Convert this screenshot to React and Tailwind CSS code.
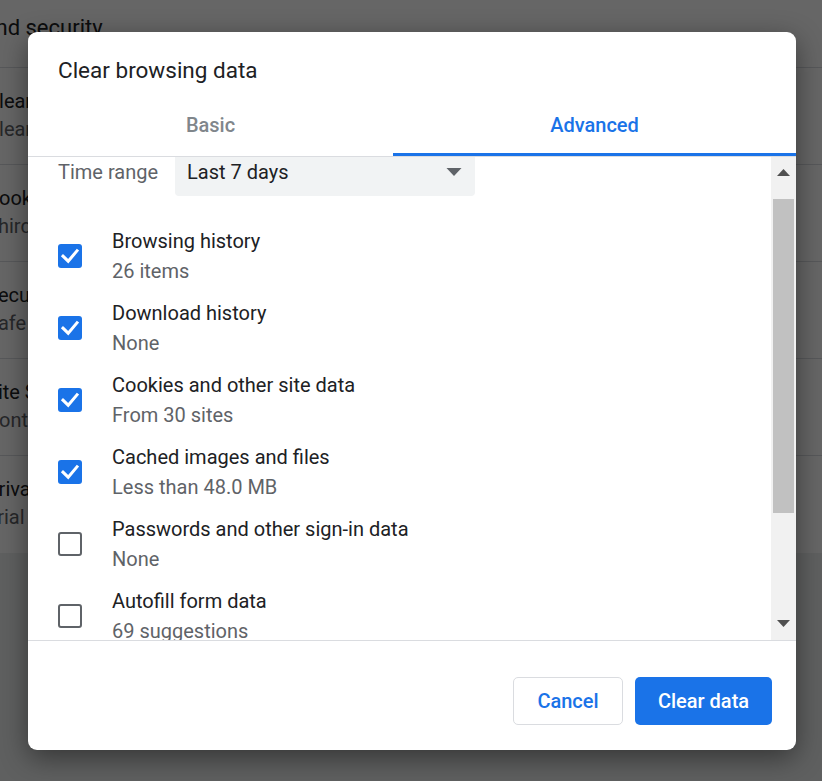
import React from 'react';

const BG_ROWS = [
  { title: 'Clear browsing data', sub: 'Clear history, cookies, cache, and more' },
  { title: 'Cookies and other site data', sub: 'Third-party cookies are blocked in Incognito mode' },
  { title: 'Security', sub: 'Safe Browsing (protection from dangerous sites) and other security settings' },
  { title: 'Site Settings', sub: 'Controls what information sites can use and show' },
  { title: 'Privacy Sandbox', sub: 'Trial features are on' },
];

const ITEMS = [
  { label: 'Browsing history', sub: '26 items', checked: true },
  { label: 'Download history', sub: 'None', checked: true },
  { label: 'Cookies and other site data', sub: 'From 30 sites', checked: true },
  { label: 'Cached images and files', sub: 'Less than 48.0 MB', checked: true },
  { label: 'Passwords and other sign-in data', sub: 'None', checked: false },
  { label: 'Autofill form data', sub: '69 suggestions', checked: false },
];

function Checkbox({ checked }) {
  if (!checked) {
    return <div className="w-6 h-6 shrink-0 rounded-[3px] border-2 border-[#5f6368] bg-white" />;
  }
  return (
    <div className="w-6 h-6 shrink-0 rounded-[3px] bg-[#1a73e8] flex items-center justify-center">
      <svg width="24" height="24" viewBox="0 0 24 24" fill="none">
        <path d="M5 12.2l5.2 5L19 6.8" stroke="#fff" strokeWidth="3" strokeLinecap="square" />
      </svg>
    </div>
  );
}

function SettingsPage() {
  return (
    <div className="h-full bg-[#eef0f1]">
      <div className="bg-white h-[553px] ml-[-14px]">
        <div className="h-[67px] pb-[12px] flex items-center ml-[-79px] text-[22px] text-[#202124] whitespace-nowrap">Privacy and security</div>
        {BG_ROWS.map((r) => (
          <div key={r.title} className="h-[97px] border-t border-[#dadce0] flex flex-col justify-center pb-[2px]">
            <div className="text-[20px] leading-[28px] text-[#202124] whitespace-nowrap">{r.title}</div>
            <div className="text-[20px] leading-[28px] text-[#5f6368] whitespace-nowrap">{r.sub}</div>
          </div>
        ))}
      </div>
    </div>
  );
}

export default function App() {
  return (
    <div className="relative w-full h-[781px] overflow-hidden" style={{ fontFamily: 'Roboto, "Liberation Sans", sans-serif' }}>
      <SettingsPage />

      {/* Scrim + dialog */}
      <div className="absolute inset-0 bg-black/60 flex items-center justify-center pl-[2px]">
        <div className="w-[768px] h-[718px] bg-white rounded-[9px] shadow-[0_8px_28px_rgba(0,0,0,0.45)] flex flex-col overflow-hidden">
          <div className="pt-[24px] pb-[16px] px-[30px] text-[22.5px] leading-[29px] text-[#202124]">Clear browsing data</div>

          {/* Tabs */}
          <div className="flex border-b border-[#dadce0]">
            <div className="w-[365px] h-[55px] pb-[4px] flex items-center justify-center text-[20px] font-medium text-[#80868b] border-b-[3px] border-transparent">
              Basic
            </div>
            <div className="flex-1 h-[55px] pb-[4px] flex items-center justify-center text-[20px] font-medium text-[#1a73e8] border-b-[3px] border-[#1a73e8]">
              Advanced
            </div>
          </div>

          {/* Scrollable content */}
          <div className="flex h-[484px] border-b border-[#dadce0]">
            <div className="flex-1 overflow-hidden">
              <div className="mt-[-9px] pl-[30px]">
                <div className="flex items-center h-[48px]">
                  <div className="w-[117px] text-[20px] text-[#5f6368]">Time range</div>
                  <div className="w-[300px] h-[48px] mt-[1px] bg-[#f1f3f4] rounded-[4px] flex items-center justify-between pl-[12px] pr-[13px]">
                    <span className="text-[20px] text-[#202124]">Last 7 days</span>
                    <svg width="16" height="8" viewBox="0 0 16 8">
                      <path d="M0.5 0h15L8 8z" fill="#5f6368" />
                    </svg>
                  </div>
                </div>
                <div className="mt-[24px] flex flex-col">
                  {ITEMS.map((it) => (
                    <div key={it.label} className="h-[72px] shrink-0 flex items-center gap-[30px]">
                      <Checkbox checked={it.checked} />
                      <div className="flex flex-col">
                        <div className="text-[20px] leading-[30px] text-[#202124] whitespace-nowrap">{it.label}</div>
                        <div className="text-[20px] leading-[30px] text-[#5f6368] whitespace-nowrap">{it.sub}</div>
                      </div>
                    </div>
                  ))}
                </div>
              </div>
            </div>

            {/* Scrollbar */}
            <div className="w-[25px] bg-[#f1f1f1] flex flex-col items-center">
              <div className="h-[30px] w-full flex items-center justify-center pt-[2px]">
                <svg width="13" height="7" viewBox="0 0 13 7"><path d="M6.5 0L13 7H0z" fill="#505050" /></svg>
              </div>
              <div className="mt-[12px] w-[21px] h-[314px] bg-[#c1c1c1]" />
              <div className="flex-1" />
              <div className="h-[30px] w-full flex items-center justify-center pb-[2px]">
                <svg width="13" height="7" viewBox="0 0 13 7"><path d="M0 0h13L6.5 7z" fill="#505050" /></svg>
              </div>
            </div>
          </div>

          {/* Footer */}
          <div className="flex justify-end gap-[12px] pt-[36px] pr-[24px]">
            <button className="w-[110px] h-[48px] rounded-[5px] border border-[#dadce0] bg-white text-[20px] font-medium text-[#1a73e8]">
              Cancel
            </button>
            <button className="w-[137px] h-[48px] rounded-[5px] bg-[#1a73e8] text-[20px] font-medium text-white">
              Clear data
            </button>
          </div>
        </div>
      </div>
    </div>
  );
}
